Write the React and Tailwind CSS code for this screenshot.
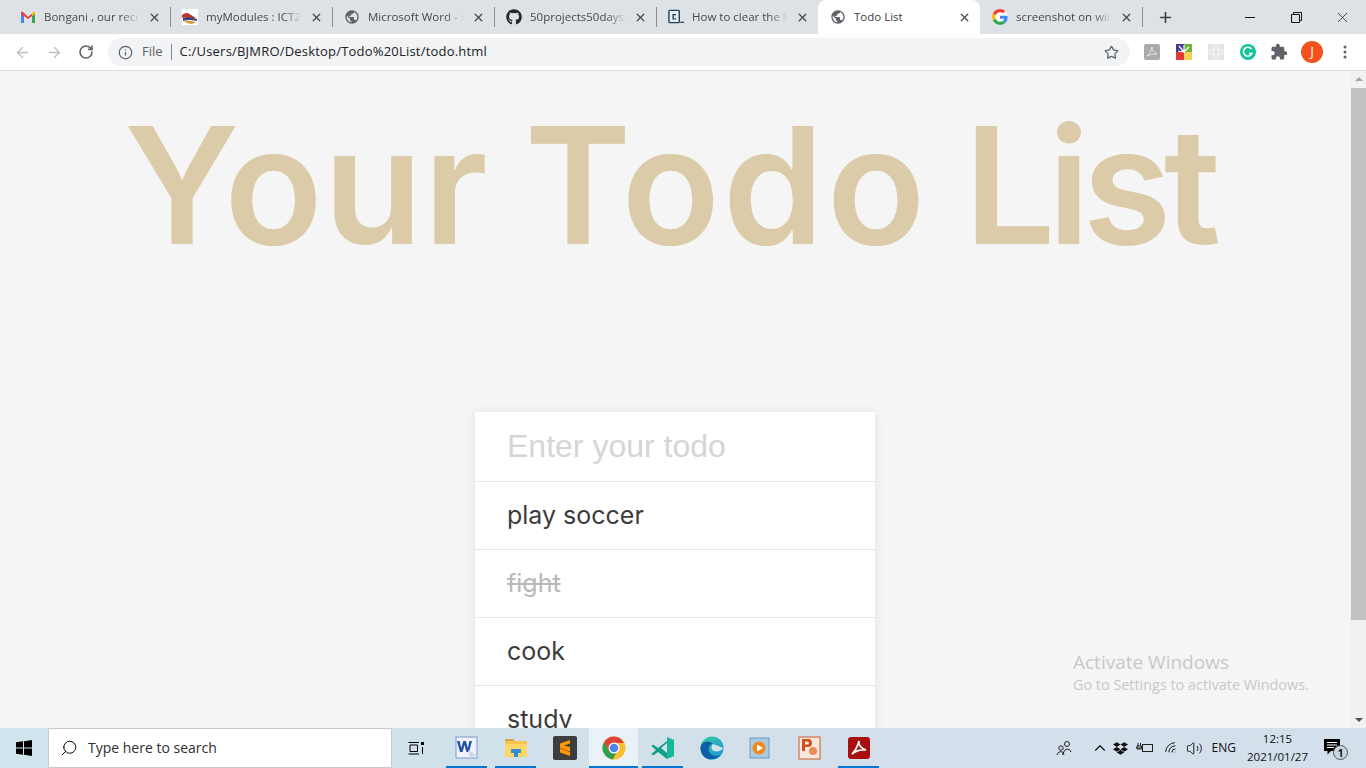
import React from "react";
import { ArrowLeft, ArrowRight, RotateCw, Info, Star, X, Plus, Search, ChevronUp, Volume2, Wifi } from "lucide-react";
import { FaGithub, FaDropbox } from "react-icons/fa";
import { MdExtension, MdPublic } from "react-icons/md";

const GmailIcon = () => (
  <svg width="16" height="16" viewBox="0 0 16 16">
    <path d="M1 3.5 L1 14 L4 14 L4 6.5 Z" fill="#4285f4" />
    <path d="M12 6.5 L12 14 L15 14 L15 3.5 Z" fill="#34a853" />
    <path d="M1 3.5 L1 5 L8 10 L8 7.8 L3 3 Q1.5 2 1 3.5 Z" fill="#ea4335" />
    <path d="M8 7.8 L8 10 L12 7 L12 4.8 Z" fill="#ea4335" />
    <path d="M12 4.8 L12 7 L15 5 L15 3.5 Q14.5 2 13 3 Z" fill="#fbbc04" />
  </svg>
);

const ModulesIcon = () => (
  <svg width="16" height="16" viewBox="0 0 16 16">
    <rect width="16" height="16" fill="#fff" />
    <path d="M0 6 Q5 2 9 6 L14 9 L6 9 Q2 8 0 9 Z" fill="#b9362b" />
    <path d="M1 9 Q7 7 15 10 L15 12 Q7 10 1 12 Z" fill="#3c3f78" />
    <path d="M2 12 Q8 11 14 13 L10 15 Q5 15 2 12 Z" fill="#d99a3a" />
  </svg>
);

const CodeIcon = () => (
  <svg width="17" height="16" viewBox="0 0 17 16">
    <rect x="1" y="1" width="11" height="13" rx="1" fill="#e8eef2" stroke="#1d4560" strokeWidth="1.5" />
    <path d="M8.5 5.5 H5.5 V10 H8.5" fill="none" stroke="#1d4560" strokeWidth="1.5" />
    <rect x="13" y="13" width="4" height="1.3" fill="#1d4560" />
  </svg>
);

const GoogleIcon = () => (
  <svg width="16" height="16" viewBox="0 0 48 48">
    <circle cx="24" cy="24" r="24" fill="#fff" />
    <path fill="#ea4335" d="M24 9.5c3.5 0 6.7 1.2 9.2 3.6l6.9-6.9C35.9 2.4 30.5 0 24 0 14.6 0 6.5 5.4 2.6 13.2l8 6.2C12.4 13.7 17.7 9.5 24 9.5z" />
    <path fill="#4285f4" d="M47 24.5c0-1.6-.2-3.1-.4-4.5H24v9h12.9c-.6 3-2.2 5.500-4.800 7.200l7.700 6C44.400 38.600 47 32.100 47 24.500z" />
    <path fill="#fbbc05" d="M10.500 28.600A14.500 14.500 0 0 1 10.500 19.400l-8-6.200a24 24 0 0 0 0 21.600z" />
    <path fill="#34a853" d="M24 48c6.500 0 11.900-2.100 15.900-5.800l-7.700-6c-2.200 1.400-4.900 2.300-8.200 2.300-6.300 0-11.600-4.200-13.500-9.900l-8 6.200C6.500 42.600 14.600 48 24 48z" />
  </svg>
);

const tabs = [
  { title: "Bongani , our recommendations", icon: <GmailIcon /> },
  { title: "myModules : ICT2613", icon: <ModulesIcon /> },
  { title: "Microsoft Word - ICT", icon: <MdPublic size={18} className="text-[#5f6368]" /> },
  { title: "50projects50days/todo", icon: <FaGithub size={16} className="text-[#24292e]" /> },
  { title: "How to clear the list", icon: <CodeIcon /> },
  { title: "Todo List", icon: <MdPublic size={18} className="text-[#5f6368]" />, active: true },
  { title: "screenshot on windows", icon: <GoogleIcon /> },
];

function Tab({ tab, showDivider }) {
  return (
    <div
      className={`relative flex h-[34px] w-[162px] shrink-0 items-center pl-3 pr-[9px] ${
        tab.active ? "rounded-t-lg bg-white" : ""
      }`}
    >
      <span className="flex w-[16px] shrink-0 items-center justify-center">{tab.icon}</span>
      <span
        className={`ml-2 min-w-0 flex-1 overflow-hidden whitespace-nowrap text-[11.5px] ${
          tab.active
            ? "text-[#3c4043]"
            : "text-[#45494e] [mask-image:linear-gradient(to_right,black_80%,transparent_100%)]"
        }`}
      >
        {tab.title}
      </span>
      <X size={13} strokeWidth={2.4} className="ml-2 shrink-0 text-[#45494e]" />
      {showDivider && <span className="absolute -right-px top-[7px] h-[20px] w-px bg-[#8b8e92]" />}
    </div>
  );
}

const ChromeToolbar = () => (
  <div className="flex h-[37px] items-center border-b border-[#dadce0] bg-white">
    <div className="flex w-[108px] items-center pl-[14px] text-[#bdc0c4]">
      <ArrowLeft size={17} strokeWidth={2} />
      <ArrowRight size={17} strokeWidth={2} className="ml-[15px]" />
      <RotateCw size={16} strokeWidth={2.4} className="ml-[15px] text-[#5f6368]" />
    </div>
    <div className="flex h-[28px] w-[1022px] items-center rounded-full bg-[#f1f3f4] pl-[10px] pr-[10px]">
      <Info size={15} strokeWidth={2} className="text-[#5f6368]" />
      <span className="ml-[9px] text-[13px] text-[#5f6368]">File</span>
      <span className="ml-[8px] h-[16px] w-px bg-[#80868b]" />
      <span className="ml-[8px] flex-1 text-[13px] tracking-[0.2px] text-[#202124]">C:/Users/BJMRO/Desktop/Todo%20List/todo.html</span>
      <Star size={15} strokeWidth={2} className="mr-px text-[#5f6368]" />
    </div>
    <div className="flex flex-1 items-center pl-[14px]">
      <svg width="16" height="16" viewBox="0 0 16 16">
        <rect width="16" height="16" rx="2" fill="#ababab" />
        <path d="M3 12 Q7 9 8 3 Q8 8 13 10 Q7 9.500 3 12 Z" fill="none" stroke="#e4e4e4" strokeWidth="1" />
      </svg>
      <svg width="16" height="16" viewBox="0 0 16 16" className="ml-[16px]">
        <rect width="8" height="8" fill="#4b3a8c" />
        <rect x="8" width="8" height="8" fill="#6cb33f" />
        <rect y="8" width="8" height="8" fill="#e53935" />
        <rect x="8" y="8" width="8" height="8" fill="#f2cf5b" />
        <path d="M8 8 L3 2 M8 8 L8 1 M8 8 L13 3 M8 8 L2 7" stroke="#fff" strokeWidth="1.200" />
      </svg>
      <svg width="16" height="16" viewBox="0 0 16 16" className="ml-[16px]">
        <rect width="16" height="16" fill="#e6e6e6" />
        <ellipse cx="8" cy="8" rx="6.500" ry="2.600" fill="none" stroke="#f6f6f6" />
        <ellipse cx="8" cy="8" rx="2.600" ry="6.500" fill="none" stroke="#f6f6f6" />
      </svg>
      <svg width="16" height="16" viewBox="0 0 16 16" className="ml-[16px]">
        <circle cx="8" cy="8" r="8" fill="#15c39a" />
        <path d="M11.500 5 A4.500 4.500 0 1 0 12 9.500 L9 9.500" fill="none" stroke="#fff" strokeWidth="1.600" />
      </svg>
      <MdExtension size={18} className="ml-[14px] text-[#5f6368]" />
      <span className="ml-[13px] flex h-[22px] w-[22px] items-center justify-center rounded-full bg-[#f4511e] text-xs text-white">J</span>
      <svg width="4" height="14" viewBox="0 0 4 14" className="ml-[20px]">
        <circle cx="2" cy="2" r="1.500" fill="#5f6368" />
        <circle cx="2" cy="7" r="1.500" fill="#5f6368" />
        <circle cx="2" cy="12" r="1.500" fill="#5f6368" />
      </svg>
    </div>
  </div>
);

const todos = [
  { text: "play soccer" },
  { text: "fight", done: true },
  { text: "cook" },
  { text: "study" },
];

function TodoPage() {
  return (
    <div className="flex h-full flex-1 flex-col items-center overflow-hidden bg-[#f5f5f5]">
      {/* each word gets its own tracking, Inter's widths differ from the original font */}
      <h1 className="h-[341px] w-full shrink-0 pt-[19px] pr-[13px] text-center font-['Inter',sans-serif] text-[162px] font-semibold leading-[190px] tracking-[-3px] [word-spacing:-2px] whitespace-nowrap text-[#dccba9]">
        <span className="tracking-[0.75px]">Your</span> <span className="tracking-[2.75px]">Todo</span>{" "}
        <span className="tracking-[-7.75px]">List</span>
      </h1>
      <div className="w-[400px] shrink-0 bg-white shadow-[0_0_10px_rgba(0,0,0,0.08)]">
        <input
          readOnly
          placeholder="Enter your todo"
          className="block h-[70px] w-full border-b border-[#e5e5e5] px-8 font-['Liberation_Sans',sans-serif] text-[32px] text-[#444] outline-none placeholder:text-[#d5d5d5]"
        />
        <ul>
          {todos.map((t) => (
            <li
              key={t.text}
              className={`h-[68px] border-b border-[#e5e5e5] px-8 font-['Inter',sans-serif] text-[25px] leading-[66px] ${
                t.done ? "text-[#b9b9b9] line-through" : "text-[#3c3c3c]"
              }`}
            >
              {t.text}
            </li>
          ))}
        </ul>
      </div>
    </div>
  );
}

const Scrollbar = () => (
  <div className="flex h-full w-[16px] shrink-0 flex-col items-center bg-[#f1f1f1] pl-px">
    <span className="mt-[6px] h-0 w-0 border-x-[4px] border-b-[4px] border-x-transparent border-b-[#a3a3a3]" />
    <span className="mt-[7px] h-[532px] w-full bg-[#c1c1c1]" />
    <span className="mt-auto mb-[6px] h-0 w-0 border-x-[4px] border-t-[4px] border-x-transparent border-t-[#505050]" />
  </div>
);

const appIcons = [
  {
    id: "word", line: true,
    icon: (
      <svg width="24" height="24" viewBox="0 0 24 24">
        <rect x="1" y="1" width="21" height="21" fill="#eef3fb" stroke="#7f9ccb" />
        <path d="M2 5 L5 16 L7.500 16 L9.500 9 L11.500 16 L14 16 L17 5 L14.500 5 L12.800 12 L10.800 5 L8.300 5 L6.300 12 L4.500 5 Z" fill="#1f4fa8" />
        <path d="M13 14 L22 19 L15 22 Z" fill="#cfd9ea" />
      </svg>
    ),
  },
  {
    id: "explorer", line: true,
    icon: (
      <svg width="24" height="24" viewBox="0 0 24 24">
        <path d="M1 3 H9 L11 5 H1 Z" fill="#d9a441" />
        <rect x="1" y="5" width="22" height="5" fill="#f5c451" />
        <rect x="1" y="8" width="22" height="13" fill="#fcd669" />
        <path d="M7 17 V13 H17 V17 H14 V21 H10 V17 Z" fill="#2f8fd6" />
      </svg>
    ),
  },
  {
    id: "sublime",
    icon: (
      <svg width="24" height="24" viewBox="0 0 24 24">
        <rect width="24" height="24" rx="2" fill="#3d3d3d" />
        <path d="M17 4 L7 7.500 L7 12 L17 15.500 L17 11 L11 9.500 L17 7.500 Z M7 12.500 L7 16.500 L17 20 L17 16 Z" fill="#ff9800" />
      </svg>
    ),
  },
  {
    id: "chrome", line: true, active: true,
    icon: (
      <svg width="24" height="24" viewBox="0 0 24 24">
        <circle cx="12" cy="12" r="11.500" fill="#fbc02d" />
        <path d="M12 .5 A11.500 11.500 0 0 0 2 6.300 L7 15 L12 7 H22 A11.500 11.500 0 0 0 12 .5 Z" fill="#db4437" />
        <path d="M2 6.300 A11.500 11.500 0 0 0 10.500 23.400 L15.500 15 L7 15 Z" fill="#2e9e4f" />
        <circle cx="12" cy="12" r="5.500" fill="#fff" />
        <circle cx="12" cy="12" r="4.300" fill="#4f86e8" />
      </svg>
    ),
  },
  {
    id: "vscode", line: true,
    icon: (
      <svg width="24" height="24" viewBox="0 0 24 24">
        <path d="M16 1 L23 4 V20 L16 23 Z" fill="#18b69a" />
        <path d="M16 5 L7 12 L2 8.500 L0.500 10 L5 14 L0.500 18 L2 19.500 L7 16 L16 23 Z" fill="#0f9e86" />
        <path d="M16 7 L10 12 L16 17 Z" fill="#d3e3ed" />
      </svg>
    ),
  },
  {
    id: "edge",
    icon: (
      <svg width="24" height="24" viewBox="0 0 24 24">
        <defs>
          <linearGradient id="edgeFill" x1="0" y1="0" x2="1" y2="1">
            <stop offset="0" stopColor="#37d0a0" />
            <stop offset="1" stopColor="#1b8fd8" />
          </linearGradient>
        </defs>
        <circle cx="12" cy="12" r="11.500" fill="url(#edgeFill)" />
        <path d="M.5 12 C1 6 8 3 13 8 C10 8 8 11 9 15 C10 19 15 21 20 19 C17 23 12 24 8 23 C3 21 .5 17 .5 12 Z" fill="#0c5fa8" />
        <path d="M13 8 C17 9 20 11 23 12 C22 15 17 16 14 15 C11 14 11 10 13 8 Z" fill="#d3e3ed" />
      </svg>
    ),
  },
  {
    id: "media",
    icon: (
      <svg width="24" height="24" viewBox="0 0 24 24">
        <rect x="1" y="2" width="19" height="20" fill="#a9cbe4" stroke="#6a9cc2" />
        <circle cx="10" cy="12" r="6.500" fill="#f08a1d" />
        <path d="M8 8.500 L14 12 L8 15.500 Z" fill="#fff" />
      </svg>
    ),
  },
  {
    id: "powerpoint",
    icon: (
      <svg width="24" height="24" viewBox="0 0 24 24">
        <rect x="1" y="1" width="21" height="22" fill="#f7e7dc" stroke="#cf5a2b" />
        <path d="M4 3 H10 Q14 3 14 7 Q14 11 10 11 H7 V15 H4 Z M7 5.500 V8.500 H9.500 Q11 8.500 11 7 Q11 5.500 9.500 5.500 Z" fill="#d2501c" />
        <circle cx="15" cy="15" r="4" fill="#e98a5a" />
      </svg>
    ),
  },
  {
    id: "acrobat", line: true,
    icon: (
      <svg width="24" height="24" viewBox="0 0 24 24">
        <rect x="1" y="1" width="22" height="22" rx="3" fill="#a90f0f" />
        <path d="M5 18 Q10 13 12 5 Q11 11 19 14 Q11 13 5 18 Z" fill="none" stroke="#fff" strokeWidth="1.700" />
      </svg>
    ),
  },
];

const Taskbar = () => (
  <div className="flex h-[40px] shrink-0 items-center bg-[linear-gradient(to_right,#cfe5ee,#d2e0ea_45%,#d4dfec)]">
    <div className="flex h-full w-[48px] items-center justify-center">
      <svg width="16" height="16" viewBox="0 0 16 16" fill="#000">
        <path d="M0 2.300 L7 1.300 V7.500 H0 Z M8 1.200 L16 0 V7.500 H8 Z M0 8.500 H7 V14.700 L0 13.700 Z M8 8.500 H16 V16 L8 14.800 Z" />
      </svg>
    </div>
    <div className="flex h-full w-[344px] items-center border border-[#c9c9c9] bg-white pl-[11px] font-['Open_Sans',sans-serif] text-sm text-[#2e2e2e]">
      <Search size={18} strokeWidth={1.300} className="-scale-x-100 text-black" />
      <span className="ml-[10px]">Type here to search</span>
    </div>
    <div className="flex h-full w-[48px] items-center justify-center">
      <svg width="16" height="16" viewBox="0 0 16 16" fill="none" stroke="#000">
        <path d="M.5 2.500 H11 M.5 14 H11 M2 5 H9.500 V11.500 H2 Z M14.500 7 V14" />
        <rect x="13" y="2" width="3" height="3" fill="#000" stroke="none" />
      </svg>
    </div>
    <div className="ml-[2px] flex h-full">
      {appIcons.map((a) => (
        <div
          key={a.id}
          className={`relative flex h-full w-[49px] items-center justify-center ${a.active ? "bg-[#e9f2f7]" : ""}`}
        >
          {a.icon}
          {a.line && (
            <span className={`absolute bottom-0 h-[2px] bg-[#0078d7] ${a.active ? "inset-x-0" : "inset-x-1"}`} />
          )}
        </div>
      ))}
    </div>
    <div className="ml-auto flex h-full items-center text-[#111] font-['Open_Sans',sans-serif]">
      <svg width="16" height="16" viewBox="0 0 16 16" fill="none" stroke="#222" strokeWidth="1">
        <circle cx="11" cy="4" r="2.500" /><path d="M6.500 15 Q8 9 11 9 Q14 9 15 12" />
        <circle cx="5" cy="8" r="2.200" /><path d="M1 15 Q2 11.500 5 11.500 Q7 11.500 8 15" />
      </svg>
      <ChevronUp size={18} strokeWidth={1.500} className="ml-[19px]" />
      <FaDropbox size={15} className="ml-[4px]" />
      <svg width="17" height="14" viewBox="0 0 17 14" fill="none" stroke="#222" className="ml-[8px]">
        <rect x="6.500" y="3.500" width="10" height="7" /><path d="M0 7 H6 M2 2 V5 M4.500 2 V5 M1 5 H5.500 V8 H1 Z" />
      </svg>
      <Wifi size={15} strokeWidth={1.500} className="ml-[11px] -rotate-45" />
      <Volume2 size={17} strokeWidth={1.300} className="ml-[7px]" />
      <span className="ml-[9px] text-xs">ENG</span>
      <div className="ml-[12px] flex w-[59px] flex-col items-center text-[11.5px] leading-[18px]">
        <span>12:15</span>
        <span className="whitespace-nowrap">2021/01/27</span>
      </div>
      <div className="relative ml-[17px] mr-[25px] h-[20px] w-[17px]">
        <svg width="16" height="16" viewBox="0 0 16 16" className="absolute left-0 top-[1px]">
          <path d="M0 0 H16 V12 H7 L3.500 15.500 V12 H0 Z" fill="#000" />
          <path d="M3 3.500 H13 M3 6 H13 M3 8.500 H10" stroke="#fff" />
        </svg>
        <span className="absolute -right-[7px] top-[7px] flex h-[15px] w-[15px] items-center justify-center rounded-full border border-[#555] bg-[#c9d6e0] text-[10px] font-bold leading-none">1</span>
      </div>
    </div>
  </div>
);

export default function App() {
  return (
    <div className="relative flex h-screen w-full flex-col overflow-hidden font-['Open_Sans',sans-serif]">
      <div className="flex h-[34px] shrink-0 items-center bg-[#dee1e6] pl-2">
        {tabs.map((tab, i) => (
          <Tab key={tab.title} tab={tab} showDivider={i !== 4 && i !== 5} />
        ))}
        <Plus size={17} strokeWidth={2.300} className="ml-[15px] text-[#3c4043]" />
        <div className="ml-auto flex h-full items-center text-[#111]">
          <span className="mr-[36px] h-px w-[10px] bg-[#111]" />
          <svg width="11" height="11" viewBox="0 0 11 11" fill="none" stroke="#111" className="mr-[32px]">
            <path d="M.5 2.500 H8.500 V10.500 H.5 Z M2.500 2.500 V.5 H10.500 V8.500 H8.500" />
          </svg>
          <X size={17} strokeWidth={1} className="mr-[15px]" />
        </div>
      </div>
      <ChromeToolbar />
      <div className="flex min-h-0 flex-1">
        <TodoPage />
        <Scrollbar />
      </div>
      <Taskbar />
      <div className="pointer-events-none absolute left-[1073px] top-[650px] text-[#c8c8c8]">
        <p className="text-[19px] leading-[25px]">Activate Windows</p>
        <p className="text-[14.400px] leading-[20px]">Go to Settings to activate Windows.</p>
      </div>
    </div>
  );
}
